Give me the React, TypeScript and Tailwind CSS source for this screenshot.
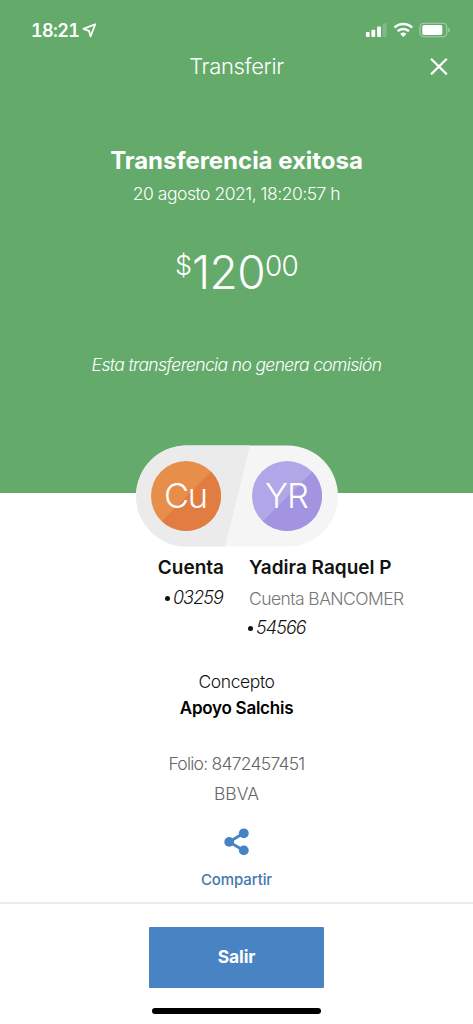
import React from "react";

function StatusBar() {
  return (
    <div className="flex h-[61px] items-center justify-between pr-[22px] pl-[31px]">
      <div className="flex items-center gap-[3px]">
        <span className="w-[48px] text-[18px] leading-[20px] font-semibold whitespace-nowrap tabular-nums tracking-[-0.65px]">18:21</span>
        <svg width="15" height="15" viewBox="0 0 14 14" fill="none" stroke="currentColor" strokeWidth="1.6" strokeLinejoin="round">
          <path d="M12.4 1.1 1.3 5.5 6.5 7.3 8 12.5Z" />
        </svg>
      </div>
      <svg className="mb-px" width="86" height="16" viewBox="0 0 86 16" fill="none">
        <g fill="white">
          <rect x="0.9" y="10" width="3.8" height="5" rx="1" />
          <rect x="6.4" y="7.7" width="3.8" height="7.3" rx="1" />
          <rect x="12.1" y="4.5" width="3.9" height="10.5" rx="1" />
          <rect x="17.7" y="1.3" width="3.8" height="13.7" rx="1" opacity=".2" />
          <path d="m38.3 15-3.1-3a4.6 4.6 0 0 1 6.2 0Z" />
        </g>
        <g stroke="white" strokeWidth="2.5">
          <path d="M29.5 5.5a12.8 12.8 0 0 1 17.6 0" />
          <path d="M32.6 9.2a8.2 8.2 0 0 1 11.4 0" />
        </g>
        <rect x="55" y="1.2" width="26.8" height="13.6" rx="4" stroke="white" strokeOpacity=".45" strokeWidth="1.1" />
        <rect x="57.3" y="3.1" width="20" height="9.8" rx="1.6" fill="white" />
        <path d="M83.3 5.7v4.6c1.9-.7 1.9-3.9 0-4.6Z" fill="white" fillOpacity=".5" />
      </svg>
    </div>
  );
}

function Participants() {
  return (
    <svg className="mx-auto block" width="204" height="102" viewBox="0 0 204 102">
      <defs>
        <clipPath id="pill"><rect x="1" y="0.5" width="202" height="101" rx="50.5" /></clipPath>
        <clipPath id="origin"><circle cx="51" cy="51" r="35" /></clipPath>
        <clipPath id="target"><circle cx="152" cy="51" r="35" /></clipPath>
      </defs>
      <g clipPath="url(#pill)">
        <path fill="#f5f5f5" d="M0 0h204v102H0z" />
        <path fill="#ebebeb" d="M0 0h115L90 102H0z" />
      </g>
      <g clipPath="url(#origin)">
        <path fill="#e88e4b" d="M16 16h71v71H16z" />
        <path fill="#e27d42" d="M87 16v71H16z" />
      </g>
      <g clipPath="url(#target)">
        <path fill="#b1a6e8" d="M117 16h71v71h-71z" />
        <path fill="#a294e0" d="M188 16v71h-71z" />
      </g>
      <g fill="white" fontSize="34.5" fontWeight="300" textAnchor="middle">
        <text x="51" y="63" textLength="44">Cu</text>
        <text x="152" y="63" textLength="44">YR</text>
      </g>
    </svg>
  );
}

function Account({ value }: { value: string }) {
  return (
    <div className="flex items-center gap-[3px]">
      <span className="size-[5px] rounded-full bg-[#111]" />
      <span className="text-[18px] leading-[24px] font-light tracking-[-0.9px] italic">{value}</span>
    </div>
  );
}

export default function App() {
  return (
    <main className="flex h-[1024px] w-[473px] flex-col overflow-hidden bg-white font-['Inter',sans-serif] text-[#121212]">
      <header className="flex h-[493px] shrink-0 flex-col bg-[#64aa6b] text-white">
        <StatusBar />
        <div className="-mt-[9px] grid h-[28px] grid-cols-[1fr_auto_1fr] items-center">
          <h1 className="col-start-2 text-[22px] leading-[28px] font-light tracking-[-0.35px]">Transferir</h1>
          <button className="mr-[25px] justify-self-end" aria-label="Cerrar">
            <svg className="block" width="18" height="18" viewBox="0 0 18 18" stroke="white" strokeWidth="2.2">
              <path d="m1 1.8 15.8 15.6M16.8 1.8 1 17.4" />
            </svg>
          </button>
        </div>
        <section className="flex flex-col items-center pt-[66px] whitespace-nowrap">
          <h2 className="text-[24px] leading-[30px] font-bold tracking-[-0.03px]">Transferencia exitosa</h2>
          <p className="mt-[6px] text-[17.5px] leading-[24px] font-light tracking-[-0.48px]">20 agosto 2021, 18:20:57 h</p>
          <div className="mt-[41px] flex items-start font-light">
            <span className="text-[27px] leading-[38px]">$</span>
            <span className="text-[46px] leading-[50px] tracking-[-0.6px]">120</span>
            <span className="text-[28px] leading-[38px] tracking-[-0.8px]">00</span>
          </div>
          <p className="mt-[55px] text-[17.5px] leading-[26px] font-light tracking-[-0.64px] italic">Esta transferencia no genera comisión</p>
        </section>
      </header>

      <section className="-mt-[48px] h-[111px] shrink-0">
        <Participants />
      </section>

      <section className="grid h-[86px] shrink-0 grid-cols-[224px_1fr] gap-x-[25px] whitespace-nowrap">
        <div className="flex flex-col items-end">
          <h3 className="text-[19px] leading-[24px] font-semibold">Cuenta</h3>
          <div className="mt-[6px] pr-px"><Account value="03259" /></div>
        </div>
        <div className="flex flex-col items-start">
          <h3 className="text-[19px] leading-[24px] font-semibold">Yadira Raquel P</h3>
          <p className="mt-[7px] text-[17.5px] leading-[24px] font-light tracking-[-0.57px] text-[#777]">Cuenta BANCOMER</p>
          <div className="-ml-px mt-[5px]"><Account value="54566" /></div>
        </div>
      </section>

      <section className="flex h-[260px] shrink-0 flex-col items-center pt-[28px]">
        <p className="text-[17.5px] leading-[24px] font-light tracking-[-0.4px]">Concepto</p>
        <p className="mt-[2px] text-[17px] leading-[24px] font-semibold tracking-[-0.25px] text-black">Apoyo Salchis</p>
        <p className="mt-[32px] text-[17.5px] leading-[24px] font-light tracking-[-0.75px] text-[#666]">Folio: 8472457451</p>
        <p className="mt-[6px] text-[17.5px] leading-[24px] font-light text-[#666]">BBVA</p>
        <button className="mt-[21px] flex flex-col items-center text-[#4783c3]">
          <svg width="28" height="30" viewBox="0 0 28 30" fill="currentColor">
            <path d="M21.8 6 7.2 15l14.6 8.5" fill="none" stroke="currentColor" strokeWidth="2.8" />
            <circle cx="21.8" cy="6.3" r="4.9" /><circle cx="7.2" cy="14.9" r="4.9" /><circle cx="21.8" cy="23.4" r="4.9" />
          </svg>
          <span className="mt-[13px] text-[15px] leading-[20px] font-medium tracking-[-0.1px] text-[#4577ae]">Compartir</span>
        </button>
      </section>

      <footer className="flex flex-1 flex-col items-center border-t-2 border-[#ebebeb] pt-[23px]">
        <button className="h-[61px] w-[175px] rounded-[1px] bg-[#4884c4] text-[17.5px] font-bold tracking-[-0.1px] text-white">Salir</button>
        <div className="mt-[20px] h-[6px] w-[169px] rounded-full bg-black" />
      </footer>
    </main>
  );
}
